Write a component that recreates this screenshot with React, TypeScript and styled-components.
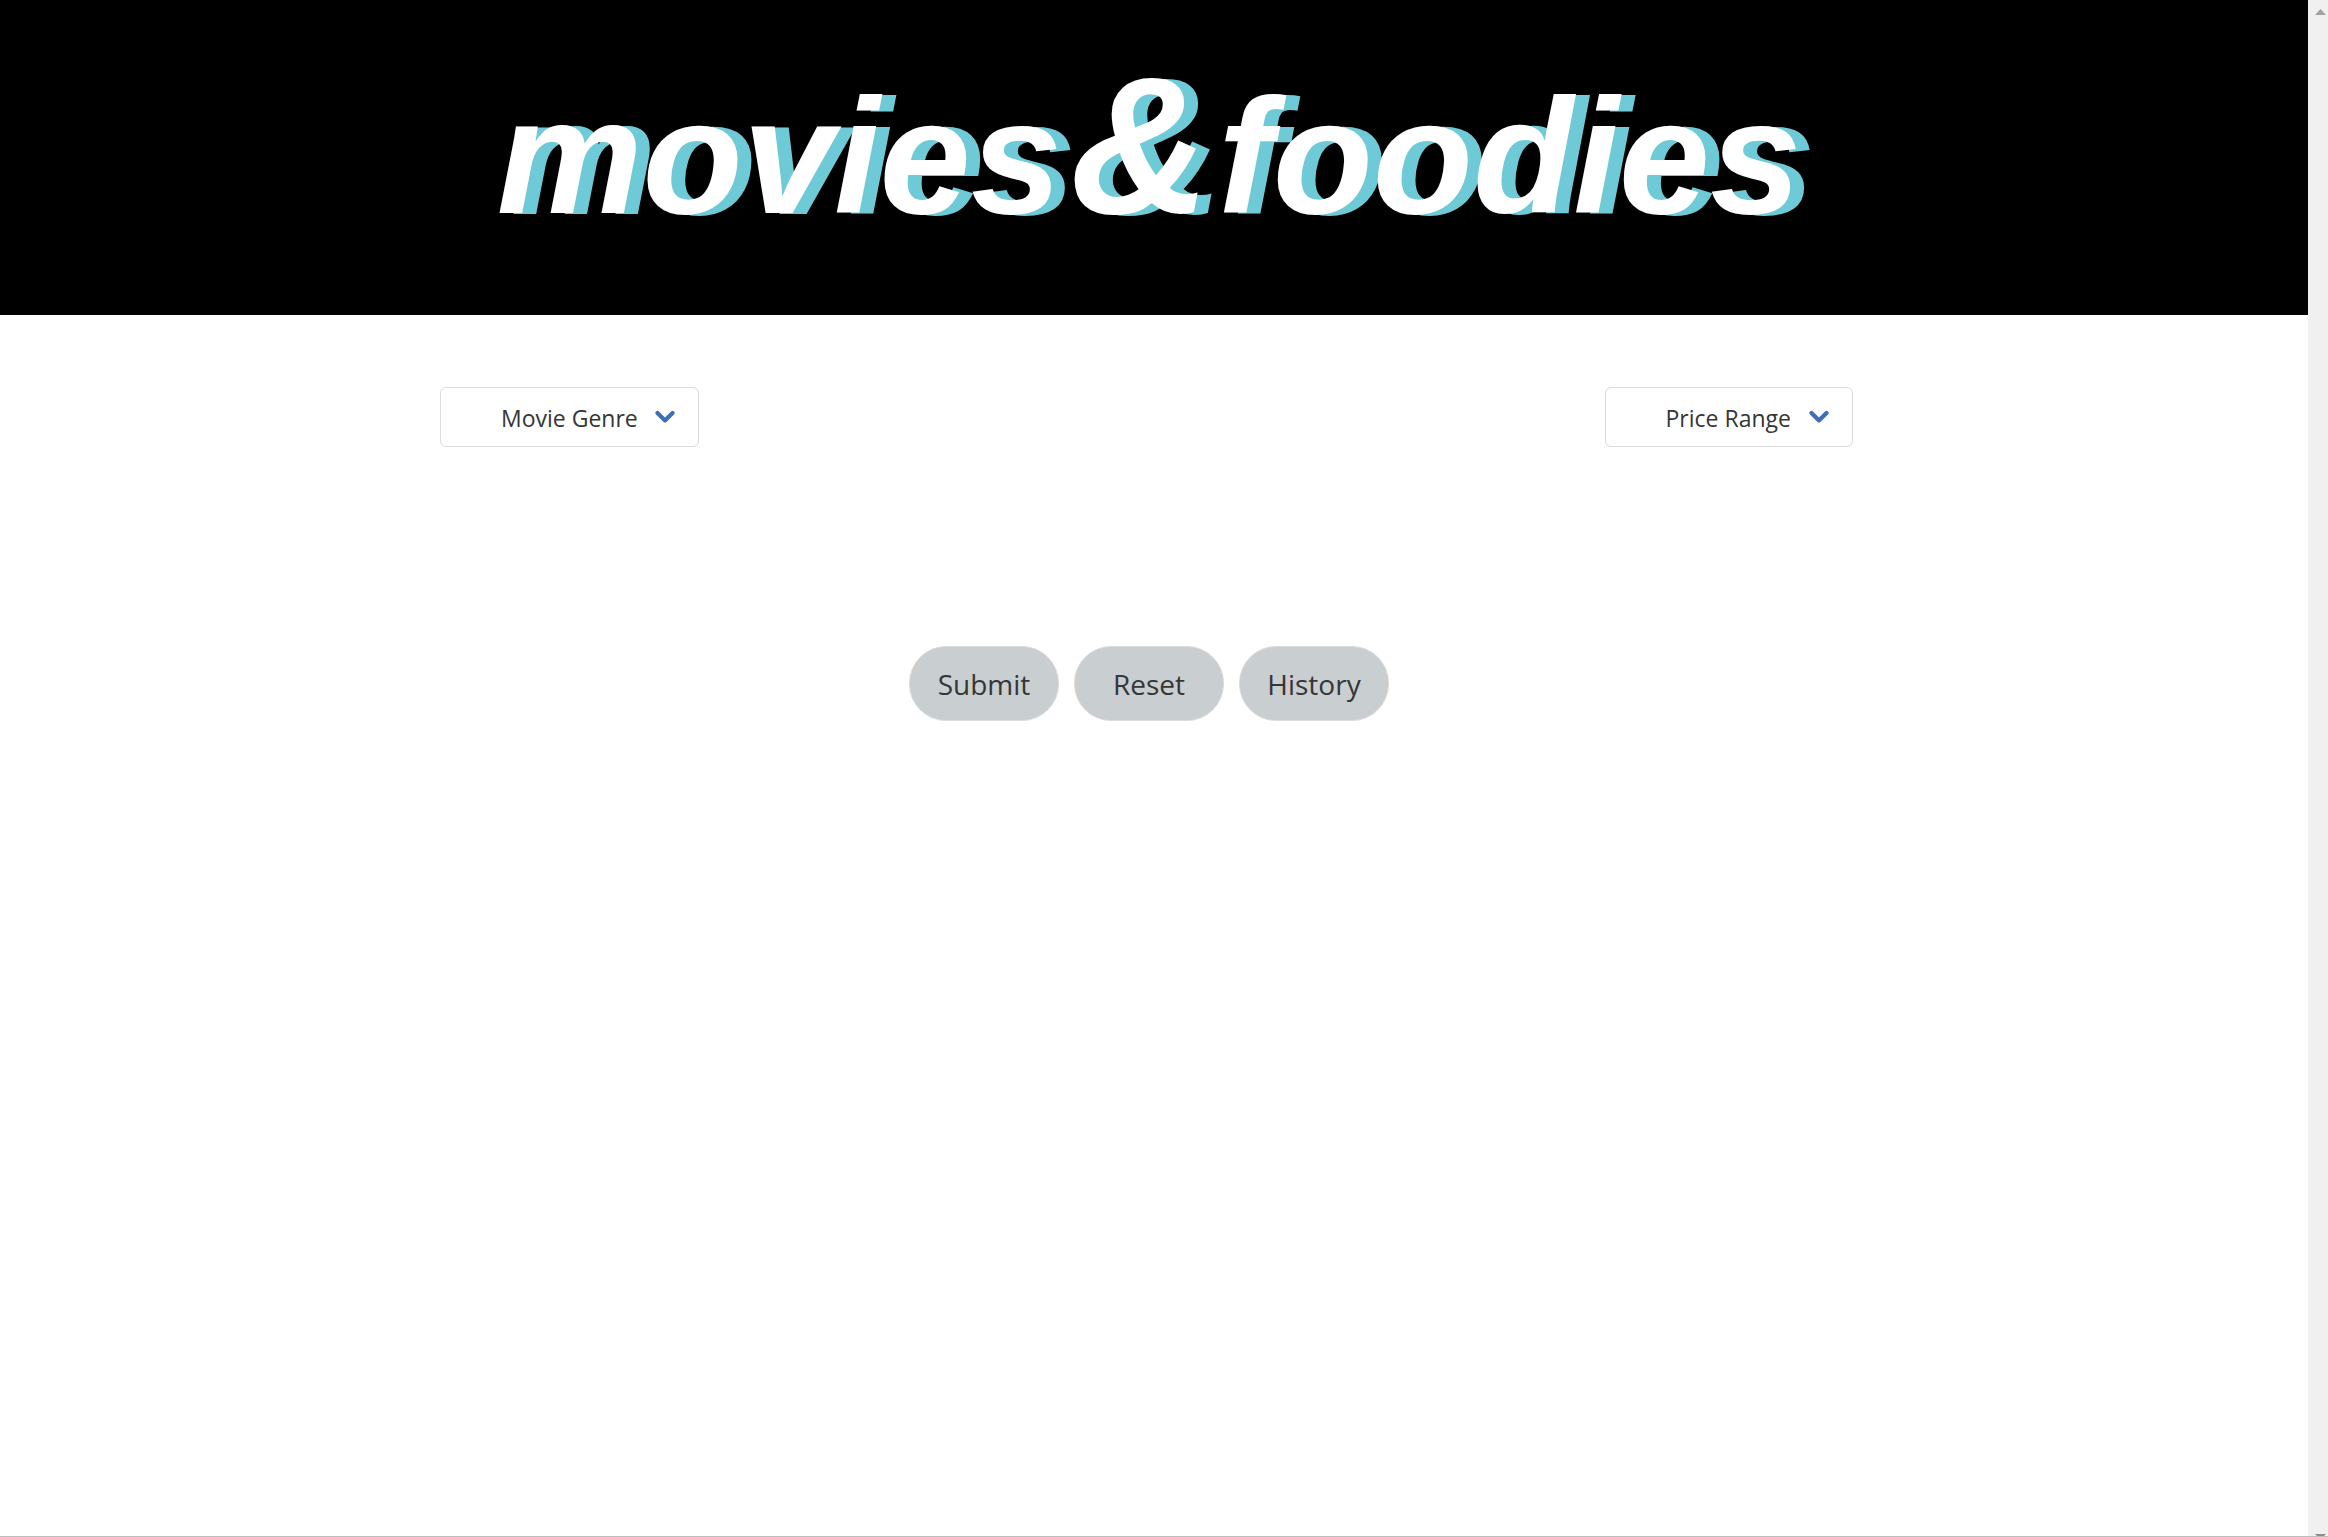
import React from "react";
import styled, { createGlobalStyle } from "styled-components";

const GlobalStyle = createGlobalStyle`
  *, *::before, *::after { box-sizing: border-box; }
  body {
    margin: 0;
    background: #ffffff;
    color: #363636;
    font-family: "Open Sans", "Noto Sans", sans-serif;
  }
`;

const Shell = styled.div`
  display: flex;
  min-height: 100vh;
  border-bottom: 1px solid #bebebe;
`;

const Page = styled.div`
  flex: 1;
  min-width: 0;
`;

const Banner = styled.header`
  display: flex;
  justify-content: center;
  align-items: center;
  height: 315px;
  padding: 0 10px 12px 0;
  background: #000000;
`;

const Wordmark = styled.h1`
  display: flex;
  align-items: baseline;
  gap: 8px;
  margin: 0;
  color: #ffffff;
  font: italic 700 164px/200px "Liberation Sans", Arial, sans-serif;
  text-shadow: 14px 1px 0 #6ecad6;
  white-space: nowrap;
`;

const Ampersand = styled.span`
  font-size: 194px;
`;

const Content = styled.main`
  display: flex;
  flex-direction: column;
  gap: 199px;
  padding: 72px 10px 0 0;
`;

const Filters = styled.section`
  display: grid;
  grid-template-columns: 1fr 1fr;
  column-gap: 20px;
  justify-items: center;
`;

const SelectBox = styled.div`
  position: relative;
`;

const Select = styled.select`
  appearance: none;
  display: block;
  height: 60px;
  padding: 2px 60px 0;
  border: 1px solid #dbdbdb;
  border-radius: 6px;
  background: #ffffff;
  color: #363636;
  font: 400 23px/32px "Open Sans", "Noto Sans", sans-serif;
  cursor: pointer;
`;

const Chevron = styled.svg`
  position: absolute;
  top: 23px;
  right: 24px;
  width: 20px;
  height: 14px;
  pointer-events: none;
`;

const Actions = styled.section`
  display: flex;
  justify-content: center;
  gap: 15px;
`;

const PillButton = styled.button`
  width: 150px;
  height: 75px;
  padding: 0;
  border: 1px solid #dbdbdb;
  border-radius: 37px;
  background: #c9ced0;
  color: #363636;
  font: 400 28px/40px "Open Sans", "Noto Sans", sans-serif;
  cursor: pointer;
`;

const ScrollTrack = styled.div`
  display: flex;
  flex-direction: column;
  justify-content: space-between;
  align-items: center;
  width: 20px;
  padding: 9px 0 0 5px;
  background: #f0f0f0;
`;

const ScrollArrow = styled.svg`
  display: block;
  width: 11px;
`;

function Picker({ label }: { label: string }) {
  return (
    <SelectBox>
      <Select aria-label={label} defaultValue="">
        <option value="">{label}</option>
      </Select>
      <Chevron viewBox="0 0 20 14" aria-hidden="true">
        <path
          d="M2.5 3 L10 10.4 L17.5 3"
          fill="none"
          stroke="#3e70b8"
          strokeWidth="4.2"
          strokeLinecap="round"
          strokeLinejoin="round"
        />
      </Chevron>
    </SelectBox>
  );
}

export default function App() {
  return (
    <>
      <GlobalStyle />
      <Shell>
        <Page>
          <Banner>
            <Wordmark>
              <span>movies</span>
              <Ampersand>&amp;</Ampersand>
              <span>foodies</span>
            </Wordmark>
          </Banner>
          <Content>
            <Filters>
              <Picker label="Movie Genre" />
              <Picker label="Price Range" />
            </Filters>
            <Actions>
              <PillButton type="button">Submit</PillButton>
              <PillButton type="button">Reset</PillButton>
              <PillButton type="button">History</PillButton>
            </Actions>
          </Content>
        </Page>
        <ScrollTrack aria-hidden="true">
          <ScrollArrow viewBox="0 0 11 6" height="6">
            <path d="M0 6 L5.5 0 L11 6 Z" fill="#a0a0a0" />
          </ScrollArrow>
          <ScrollArrow viewBox="0 0 11 2" height="2">
            <path d="M0 0 H11 L9 2 H2 Z" fill="#8c8c8c" />
          </ScrollArrow>
        </ScrollTrack>
      </Shell>
    </>
  );
}
